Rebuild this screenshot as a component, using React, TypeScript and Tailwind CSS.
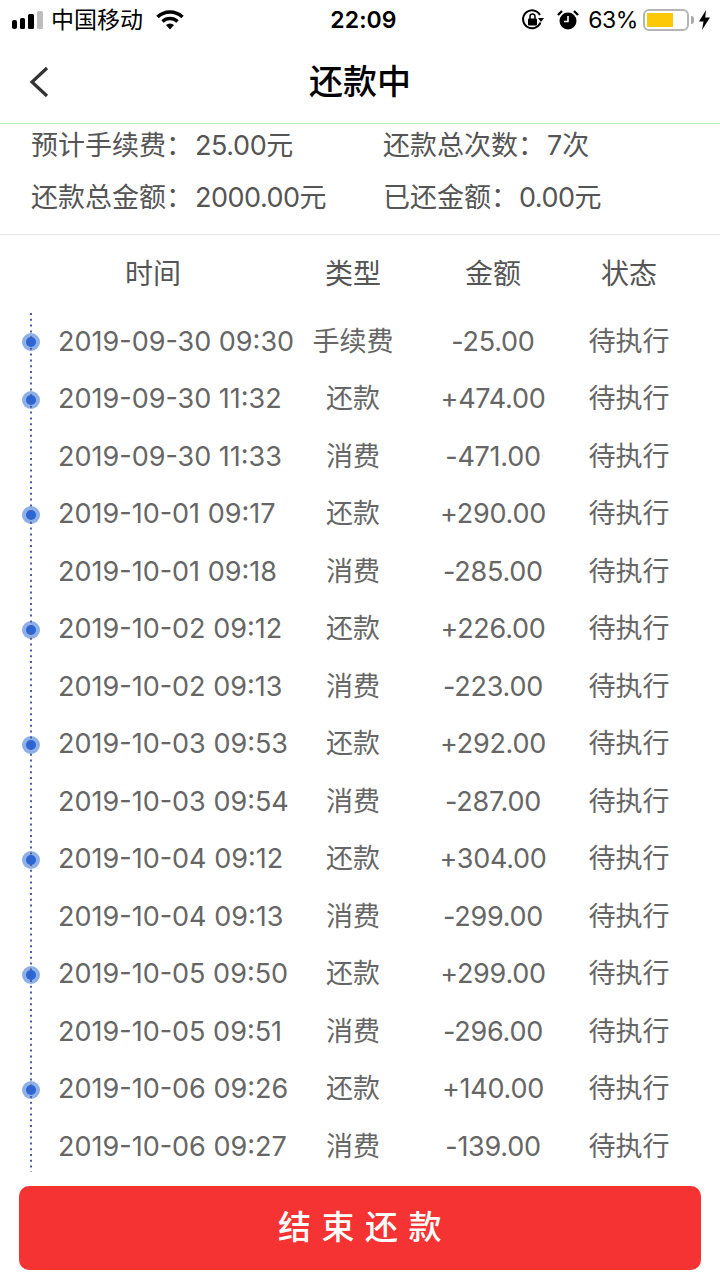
import React from "react";

const font = { fontFamily: '"Inter", "Noto Sans CJK SC", sans-serif' };

const rows: [string, string, string, boolean][] = [
  ["2019-09-30 09:30", "手续费", "-25.00", true],
  ["2019-09-30 11:32", "还款", "+474.00", true],
  ["2019-09-30 11:33", "消费", "-471.00", false],
  ["2019-10-01 09:17", "还款", "+290.00", true],
  ["2019-10-01 09:18", "消费", "-285.00", false],
  ["2019-10-02 09:12", "还款", "+226.00", true],
  ["2019-10-02 09:13", "消费", "-223.00", false],
  ["2019-10-03 09:53", "还款", "+292.00", true],
  ["2019-10-03 09:54", "消费", "-287.00", false],
  ["2019-10-04 09:12", "还款", "+304.00", true],
  ["2019-10-04 09:13", "消费", "-299.00", false],
  ["2019-10-05 09:50", "还款", "+299.00", true],
  ["2019-10-05 09:51", "消费", "-296.00", false],
  ["2019-10-06 09:26", "还款", "+140.00", true],
  ["2019-10-06 09:27", "消费", "-139.00", false],
];

function Row({ r }: { r: [string, string, string, boolean] }) {
  return (
    <div className="relative grid h-[57.54px] grid-cols-[242px_106px_174px_98px] items-center pl-[58px] text-[27px] text-[#666666]">
      {r[3] && (
        <div className="absolute left-[22px] top-[20px] flex h-[18px] w-[18px] items-center justify-center rounded-full bg-[#8fb0e6]">
          <div className="h-[10px] w-[10px] rounded-full bg-[#2a66d6]" />
        </div>
      )}
      <div className="whitespace-nowrap">{r[0]}</div>
      <div className="text-center">{r[1]}</div>
      <div className="text-center tracking-[-0.25px]">{r[2]}</div>
      <div className="text-center">待执行</div>
    </div>
  );
}

export default function App() {
  return (
    <div className="flex h-[1280px] w-[720px] flex-col overflow-hidden bg-white" style={font}>
      <div className="flex h-[40px] items-center justify-between text-black">
        <div className="flex w-[240px] items-center pl-[12px]">
          <svg width="32" height="18" viewBox="0 0 32 18" className="shrink-0">
            <rect x="0" y="9" width="5" height="9" rx="2" fill="#000" />
            <rect x="8" y="7" width="5" height="11" rx="1.5" fill="#000" />
            <rect x="16" y="3" width="6" height="15" rx="1.5" fill="#000" />
            <rect x="25" y="0" width="6" height="18" rx="1.5" fill="#bdbdbd" />
          </svg>
          <span className="ml-[7px] whitespace-nowrap text-[23px]">中国移动</span>
          <svg width="28" height="20" viewBox="0 0 28 20" className="ml-[13px] shrink-0">
            <path d="M1.5 7 A18 18 0 0 1 26.5 7" fill="none" stroke="#000" strokeWidth="3.4" />
            <path d="M6.5 11.5 A11 11 0 0 1 21.5 11.5" fill="none" stroke="#000" strokeWidth="3.4" />
            <path d="M10 15 A6 6 0 0 1 18 15 L14 19.5 Z" fill="#000" />
          </svg>
        </div>
        <div className="w-[240px] pl-[7px] text-center text-[23px] font-semibold tracking-[0.1px]">22:09</div>
        <div className="flex w-[240px] items-center justify-end pr-[9px]">
          <svg width="24" height="24" viewBox="0 0 24 24" className="shrink-0">
            <path d="M19.5 14.5 A9 9 0 1 1 19 7" fill="none" stroke="#000" strokeWidth="2" />
            <path d="M17 10 L23 10 L20 14 Z" fill="#000" />
            <rect x="7" y="10.5" width="9" height="7" rx="1" fill="#000" />
            <path d="M9 11 V8.5 a2.5 2.5 0 0 1 5 0 V11" fill="none" stroke="#000" strokeWidth="1.5" />
          </svg>
          <svg width="22" height="22" viewBox="0 0 22 22" className="ml-[12px] shrink-0">
            <circle cx="11" cy="12" r="8.5" fill="#000" />
            <path d="M11 7 V12.5 H7" fill="none" stroke="#fff" strokeWidth="1.6" />
            <path d="M1 6 L5 2 M21 6 L17 2" stroke="#000" strokeWidth="2.4" />
          </svg>
          <span className="ml-[9px] text-[23px] tracking-[-0.4px]">63%</span>
          <div className="ml-[5px] flex h-[22px] w-[46px] items-center rounded-[6px] border-2 border-[#b5b5b5] p-[2px]">
            <div className="h-full w-[26px] bg-[#fdc806]" />
          </div>
          <div className="ml-[2px] h-[8px] w-[3px] rounded-r-full bg-[#a8a8a8]" />
          <svg width="13" height="20" viewBox="0 0 13 20" className="ml-[4px] shrink-0">
            <path d="M8 0 L1 11.5 H5.5 L4 20 L12 7.5 H7.2 Z" fill="#000" />
          </svg>
        </div>
      </div>

      <div className="relative flex h-[84px] items-center justify-center border-b border-[#bfe6bf]">
        <svg width="22" height="34" viewBox="0 0 22 34" className="absolute left-[28px] top-[25px]">
          <path d="M19 3 L4 17 L19 31" fill="none" stroke="#333333" strokeWidth="3.2" />
        </svg>
        <span className="text-[34px] font-medium text-black">还款中</span>
      </div>

      <div className="flex h-[111px] flex-col gap-2 border-b border-[#e4e4e4] pl-[31px] text-[27px] leading-[44px] text-[#555555]">
        <div className="flex whitespace-nowrap">
          <div className="flex w-[352px]">
            <span className="w-[164px]">预计手续费：</span>
            <span className="tracking-[-0.4px]">25.00元</span>
          </div>
          <div className="flex">
            <span className="w-[164px]">还款总次数：</span>
            <span>7次</span>
          </div>
        </div>
        <div className="flex whitespace-nowrap">
          <div className="flex w-[352px]">
            <span className="w-[164px]">还款总金额：</span>
            <span className="tracking-[-0.5px]">2000.00元</span>
          </div>
          <div className="flex">
            <span className="w-[136px]">已还金额：</span>
            <span className="tracking-[-0.5px]">0.00元</span>
          </div>
        </div>
      </div>

      <div className="grid h-[77px] grid-cols-[300px_106px_174px_98px] items-center text-[28px] text-[#555555]">
        <div className="pl-[6px] text-center">时间</div>
        <div className="text-center">类型</div>
        <div className="text-center">金额</div>
        <div className="text-center">状态</div>
      </div>

      <div className="relative h-[860px]">
        <div className="pt-[1px]">
          {rows.map((r) => (
            <Row key={r[0]} r={r} />
          ))}
        </div>
        <svg width="4" height="860" viewBox="0 0 4 860" className="absolute left-[29px] top-0">
          <line x1="2" y1="1" x2="2" y2="860" stroke="#4f5ea0" strokeWidth="2" strokeDasharray="2 3.8" />
        </svg>
      </div>

      <div className="px-[19px] pt-[14px]">
        <button className="flex h-[84px] w-full items-center justify-center rounded-[10px] bg-[#f53333] pl-[10px] text-[33px] font-medium tracking-[10.5px] text-white">
          结束还款
        </button>
      </div>
    </div>
  );
}
